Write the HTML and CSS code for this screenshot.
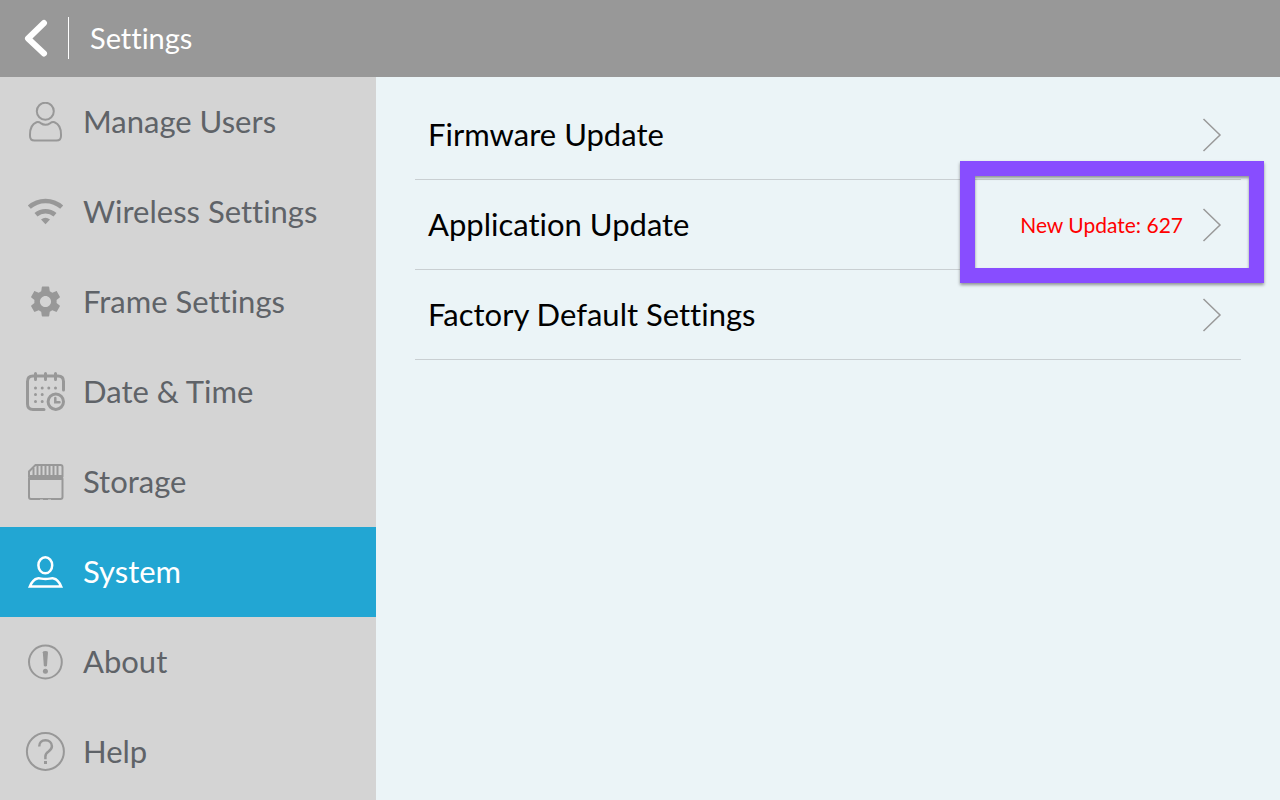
FILE: index.html
```html
<!DOCTYPE html>
<html lang="en">
<head>
<meta charset="utf-8">
<meta name="viewport" content="width=device-width, initial-scale=1">
<title>Settings</title>
<link rel="stylesheet" href="styles.css">
</head>
<body>
<header class="topbar">
  <button class="back" type="button" aria-label="Back">
    <svg class="back-icon" viewBox="0 0 26 40" aria-hidden="true"><path d="M22 5 6 20.500l16 15"/></svg>
  </button>
  <h1 class="title">Settings</h1>
</header>
<div class="layout">
  <nav class="sidebar" aria-label="Settings sections">
    <a class="item" href="#users">
      <svg class="icon line" viewBox="0 0 40 40" aria-hidden="true"><circle cx="20.3" cy="9.2" r="8.5"/><path d="M11.5 20.2C7 22 5 26.500 5 32.500v1.500q0 4.500 4.500 4.500h22q4.500 0 4.500-4.500v-1.500c0-6-2-10.500-6.500-12.300q-2.200-.8-4.200.9-5 3.400-9.600 0-2-1.700-4.200-.9z"/></svg>
      <span class="label">Manage Users</span>
    </a>
    <a class="item" href="#wireless">
      <svg class="icon" viewBox="0 0 40 40" aria-hidden="true"><g class="wifi"><path d="M4.300 15.200a24.200 24.200 0 0 1 32.400 0M11 22.700a14.500 14.500 0 0 1 19 0"/></g><path class="solid" d="M20.500 32.300 16 27.600q4.500-3.600 9 0z"/></svg>
      <span class="label">Wireless Settings</span>
    </a>
    <a class="item" href="#frame">
      <svg class="icon" viewBox="0 0 40 40" aria-hidden="true"><path class="solid" transform="translate(1.900 .9) scale(1.550)" d="M19.140 12.940c.04-.3.060-.61.060-.94 0-.32-.02-.64-.07-.94l2.030-1.580c.18-.14.230-.41.120-.61l-1.920-3.320c-.12-.22-.37-.29-.59-.22l-2.390.96c-.5-.38-1.030-.7-1.620-.94l-.36-2.540c-.04-.24-.24-.41-.48-.41h-3.840c-.24 0-.43.170-.47.410l-.36 2.540c-.59.240-1.130.57-1.620.94l-2.390-.96c-.22-.08-.47 0-.59.220L2.740 8.870c-.12.210-.08.470.12.610l2.030 1.580c-.05.300-.09.630-.09.940s.02.640.07.940l-2.030 1.580c-.18.140-.23.410-.12.610l1.920 3.320c.12.220.37.290.59.220l2.390-.96c.5.380 1.030.7 1.620.94l.36 2.540c.05.240.24.410.48.410h3.840c.24 0 .44-.17.470-.41l.36-2.540c.59-.24 1.130-.56 1.620-.94l2.390.96c.22.080.47 0 .59-.22l1.920-3.320c.12-.22.070-.47-.12-.61l-2.010-1.580zM12 15.600c-1.980 0-3.600-1.620-3.600-3.600s1.620-3.600 3.600-3.600 3.600 1.620 3.600 3.600-1.620 3.600-3.600 3.600z"/></svg>
      <span class="label">Frame Settings</span>
    </a>
    <a class="item" href="#date">
      <svg class="icon line heavy" viewBox="0 0 40 40" aria-hidden="true"><path d="M19 37.500H8q-5.500 0-5.500-5.500V9.500Q2.500 4 8 4h25q5.500 0 5.500 5.500V18M10.500 1.500v6M20.500 1.500v6M30.500 1.500v6"/><path d="M10.500 16.100h0M17.200 16.100h0M23.800 16.100h0M30.500 16.100h0M10.500 22.600h0M17.200 22.600h0M10.500 29.500h0M17.200 29.500h0"/><circle cx="30.800" cy="29.700" r="7.700"/><path class="hands" d="M30.300 26v4.300h4.200"/></svg>
      <span class="label">Date &amp; Time</span>
    </a>
    <a class="item" href="#storage">
      <svg class="icon line" viewBox="0 0 40 40" aria-hidden="true"><path d="M4 15V9.500L10.500 3h25Q37.500 3 37.500 5v10"/><path d="M8.500 6v8M12.500 3v11M16.500 3v11M20.500 3v11M24.500 3v11M28.500 3v11M32.500 3v11"/><path class="solid" d="M4.500 14h32.500v3H4.500z"/><rect x="4" y="15" width="33.500" height="22" rx="2"/><path class="notch" d="M15 38.500h3M23 38.500h3"/></svg>
      <span class="label">Storage</span>
    </a>
    <a class="item active" href="#system" aria-current="page">
      <svg class="icon line" viewBox="0 0 40 40" aria-hidden="true"><ellipse class="bold" cx="20.300" cy="13.300" rx="6.900" ry="8"/><path class="bold" d="M4.800 34.600c2-5 3.700-7.600 7.700-8.200 3-.4 4 .7 8 .7s5-1.100 8-.7c4 .6 5.700 3.200 7.700 8.200z"/></svg>
      <span class="label">System</span>
    </a>
    <a class="item" href="#about">
      <svg class="icon" viewBox="0 0 40 40" aria-hidden="true"><circle class="ring" cx="20.400" cy="20" r="16.400"/><path class="solid" d="M17.800 10.300q0-1.200 2.600-1.200t2.600 1.200l-1 13q-.2 1.200-1.600 1.200t-1.600-1.200z"/><circle class="solid" cx="20.400" cy="29.300" r="2.500"/></svg>
      <span class="label">About</span>
    </a>
    <a class="item" href="#help">
      <svg class="icon line" viewBox="0 0 40 40" aria-hidden="true"><circle cx="20.400" cy="19.500" r="18.500"/><path class="bold" d="M14.200 14.500c0-4 2.600-6.300 6.200-6.300s6.500 2.300 6.500 6c0 5.600-6.500 4.800-6.500 10v3"/><path class="solid" d="M19 29h3v3h-3z" stroke="none"/></svg>
      <span class="label">Help</span>
    </a>
  </nav>
  <main class="content">
    <ul class="options">
      <li class="option">
        <button class="row" type="button"><span class="label">Firmware Update</span><svg class="chevron" viewBox="0 0 20 34" aria-hidden="true"><path d="M1.500 1 18 17 1.500 33"/></svg></button>
      </li>
      <li class="option highlighted">
        <button class="row" type="button"><span class="label">Application Update</span><span class="status">New Update: 627</span><svg class="chevron" viewBox="0 0 20 34" aria-hidden="true"><path d="M1.500 1 18 17 1.500 33"/></svg></button>
      </li>
      <li class="option">
        <button class="row" type="button"><span class="label">Factory Default Settings</span><svg class="chevron" viewBox="0 0 20 34" aria-hidden="true"><path d="M1.500 1 18 17 1.500 33"/></svg></button>
      </li>
    </ul>
  </main>
</div>
</body>
</html>
```
FILE: styles.css
```css
*,
*::after {
  box-sizing: border-box;
}

body {
  display: flex;
  flex-direction: column;
  min-height: 100vh;
  margin: 0;
  background: #ebf4f7;
  color: #000;
  font-family: Lato, "Open Sans", sans-serif;
  font-size: 31px;
  font-variant-ligatures: none;
  line-height: 40px;
}

.topbar {
  display: flex;
  align-items: center;
  height: 77px;
  padding: 0 22px 2px;
  background: #989898;
  color: #fff;
}

.back {
  display: flex;
  align-items: center;
  width: 47px;
  height: 42px;
  padding: 0;
  border: 0;
  border-right: 1px solid #fff;
  background: none;
}

.back-icon {
  width: 26px;
  height: 40px;
  fill: none;
  stroke: #fff;
  stroke-width: 6;
  stroke-linecap: round;
  stroke-linejoin: round;
}

.title {
  margin: 0 0 0 21px;
  font-size: 29px;
  font-weight: 400;
}

.layout {
  display: flex;
  flex: 1;
}

.sidebar {
  flex: 0 0 376px;
  background: #d4d4d4;
}

.item {
  display: flex;
  align-items: center;
  gap: 18px;
  height: 90px;
  padding-left: 25px;
  color: #5f6368;
  text-decoration: none;
}

.item.active {
  background: #22a6d3;
  color: #fff;
}

.label {
  padding-bottom: 2px;
}

.icon {
  flex: none;
  width: 40px;
  height: 40px;
  color: #989898;
}

.active .icon {
  color: #fff;
}

.line,
.ring {
  fill: none;
  stroke: currentColor;
  stroke-width: 2;
}

.heavy {
  stroke-width: 3;
  stroke-linecap: round;
}

.solid {
  fill: currentColor;
}

.wifi {
  fill: none;
  stroke: currentColor;
  stroke-width: 4.5;
}

.hands,
.bold {
  stroke-width: 2.5;
}

.notch {
  stroke: #d4d4d4;
}

.content {
  flex: 1;
  min-width: 0;
  padding: 13px 39px;
}

.options {
  margin: 0;
  padding: 0;
  list-style: none;
}

.option {
  position: relative;
  border-bottom: 1px solid #c9cfd2;
}

.row {
  display: flex;
  align-items: center;
  width: 100%;
  height: 89px;
  padding: 0 19px 0 13px;
  border: 0;
  background: none;
  color: inherit;
  font: inherit;
  font-variant-ligatures: none;
  text-align: left;
}

.status {
  margin-left: auto;
  color: #f00;
  font-size: 21px;
}

.chevron {
  flex: none;
  width: 20px;
  height: 34px;
  margin-left: auto;
  fill: none;
  stroke: #999;
  stroke-width: 1.5;
}

.status + .chevron {
  margin-left: 19px;
}

.highlighted::after {
  content: "";
  position: absolute;
  z-index: 1;
  inset: -19px -23px -14px auto;
  width: 304px;
  border: 15px solid #884dff;
  box-shadow: 0 2px 3px rgba(0, 0, 0, 0.4), inset 0 2px 3px rgba(0, 0, 0, 0.4);
  pointer-events: none;
}
```
